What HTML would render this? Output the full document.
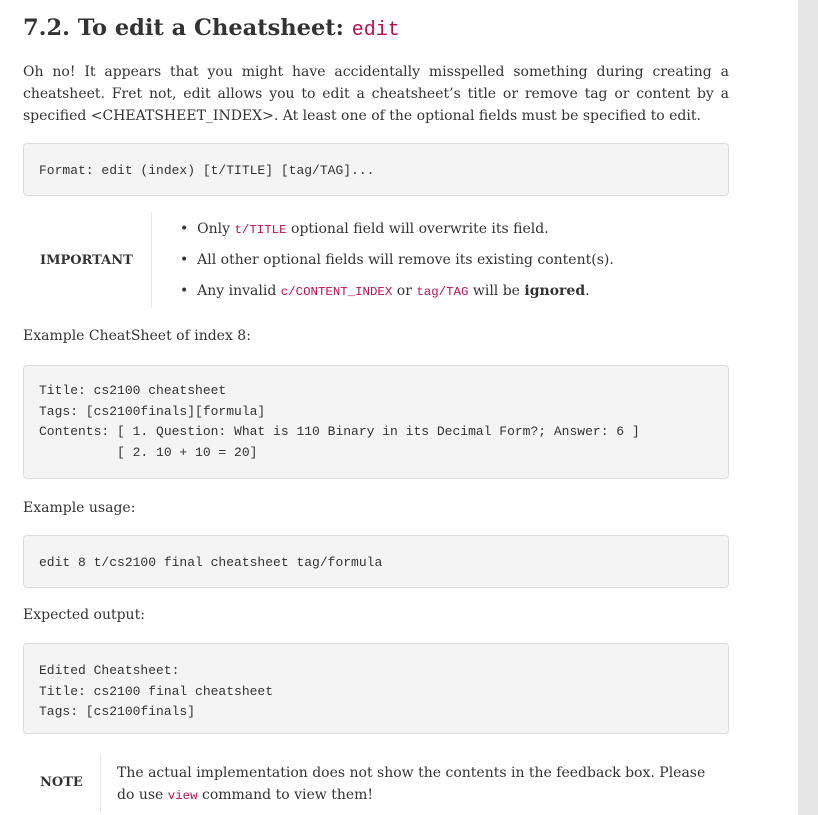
<!DOCTYPE html>
<html><head><meta charset="utf-8"><style>
html,body{margin:0;padding:0;background:#fff;width:818px;height:815px;overflow:hidden;position:relative}
body{font-family:"DejaVu Serif",serif;color:#333;font-size:14px}
.a{position:absolute;white-space:nowrap;line-height:20px}
.sb{position:absolute;left:798px;top:0;width:20px;height:815px;background:#e6e6e6}
h2{position:absolute;left:23px;top:10px;margin:0;font-size:22.5px;font-weight:bold;color:#333;line-height:36px;white-space:nowrap}
h2 code{color:#b8124f;font-weight:normal;font-size:20px;font-family:"Liberation Mono",monospace}
.c{color:#b8124f;font-size:12.4px;font-family:"Liberation Mono",monospace}
.p{position:absolute;left:23px;width:706px;line-height:22px;text-align:justify;top:61px}
.box{position:absolute;left:23px;width:706px;background:#f4f4f4;border:1px solid #dcdcdc;border-radius:4px;box-sizing:border-box}
.box pre{margin:0;position:absolute;left:15px;font-family:"Liberation Mono",monospace;font-size:13px;line-height:20.7px;color:#333}
.vl{position:absolute;width:1px;background:#e6e6e6}
.lb{font-weight:bold;font-size:13px}
</style></head><body>
<div class="sb"></div>
<h2>7.2. To edit a Cheatsheet: <code>edit</code></h2>
<div class="p">Oh no! It appears that you might have accidentally misspelled something during creating a cheatsheet. Fret not, edit allows you to edit a cheatsheet’s title or remove tag or content by a specified &lt;CHEATSHEET_INDEX&gt;. At least one of the optional fields must be specified to edit.</div>
<div class="box" style="top:143px;height:53px"><pre style="top:17px">Format: edit (index) [t/TITLE] [tag/TAG]...</pre></div>
<div class="a lb" style="left:40px;top:251px">IMPORTANT</div>
<div class="vl" style="left:151px;top:212px;height:96px"></div>
<div class="a" style="left:180px;top:219px">•&nbsp; Only <span class="c">t/TITLE</span> optional field will overwrite its field.</div>
<div class="a" style="left:180px;top:250px">•&nbsp; All other optional fields will remove its existing content(s).</div>
<div class="a" style="left:180px;top:281px">•&nbsp; Any invalid <span class="c">c/CONTENT_INDEX</span> or <span class="c">tag/TAG</span> will be <b>ignored</b>.</div>
<div class="a" style="left:23px;top:326px">Example CheatSheet of index 8:</div>
<div class="box" style="top:365px;height:114px"><pre style="top:15px">Title: cs2100 cheatsheet
Tags: [cs2100finals][formula]
Contents: [ 1. Question: What is 110 Binary in its Decimal Form?; Answer: 6 ]
          [ 2. 10 + 10 = 20]</pre></div>
<div class="a" style="left:23px;top:498px">Example usage:</div>
<div class="box" style="top:535px;height:53px"><pre style="top:17px">edit 8 t/cs2100 final cheatsheet tag/formula</pre></div>
<div class="a" style="left:23px;top:605px">Expected output:</div>
<div class="box" style="top:643px;height:91px"><pre style="top:17px">Edited Cheatsheet:
Title: cs2100 final cheatsheet
Tags: [cs2100finals]</pre></div>
<div class="a lb" style="left:40px;top:773px">NOTE</div>
<div class="vl" style="left:100px;top:754px;height:58px"></div>
<div class="a" style="left:117px;top:762px;line-height:22px">The actual implementation does not show the contents in the feedback box. Please<br>do use <span class="c">view</span> command to view them!</div>
</body></html>
